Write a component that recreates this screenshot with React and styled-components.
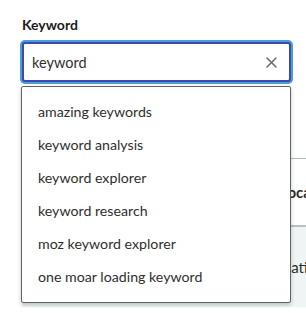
import React, { useState } from 'react';
import styled, { createGlobalStyle } from 'styled-components';

const GlobalStyle = createGlobalStyle`
  html, body {
    margin: 0;
    background: #fff;
    font-family: Lato, 'Open Sans', sans-serif;
    color: #2b2b2b;
    overflow: hidden;
  }
`;

const Page = styled.div`
  width: 306px;
  height: 313px;
  padding: 16px 0 0 22px;
  box-sizing: border-box;
  overflow: hidden;
`;

const Field = styled.div`
  position: relative;
  width: 269px;
`;

const Label = styled.label`
  display: block;
  font-size: 14px;
  font-weight: 700;
  line-height: 18px;
  color: #1d1d1d;
  margin-bottom: 8px;
`;

const InputBox = styled.div`
  display: flex;
  align-items: center;
  height: 40px;
  box-sizing: border-box;
  border: 2px solid #3a48b8;
  border-radius: 3px;
  box-shadow: 0 0 0 2px #4c9fcb;
  padding: 0 10px 0 8px;
  background: #fff;
`;

const Input = styled.input`
  flex: 1;
  border: none;
  outline: none;
  background: transparent;
  font-family: inherit;
  font-size: 14.5px;
  color: #2f2f2f;
  padding: 0;
`;

const ClearButton = styled.button`
  display: flex;
  align-items: center;
  justify-content: center;
  width: 16px;
  height: 16px;
  border: none;
  background: none;
  padding: 0;
  cursor: pointer;
`;

const Menu = styled.ul`
  position: absolute;
  z-index: 5;
  top: 70px;
  left: -1px;
  width: 270px;
  box-sizing: border-box;
  margin: 0;
  padding: 8px 0 9px;
  list-style: none;
  background: #fff;
  border: 1px solid #5d6468;
  border-radius: 2px;
  box-shadow: 0 2px 4px rgba(0, 0, 0, 0.22);
`;

const Option = styled.li`
  height: 33px;
  line-height: 33px;
  padding-left: 16px;
  font-size: 14.2px;
  color: #2f2f2f;
`;

const Table = styled.div`
  display: grid;
  grid-template-columns: 258px 1fr;
  width: 320px;
  margin-top: 76px;
`;

const Cell = styled.div`
  height: ${({ $head }) => ($head ? '66px' : '80px')};
  display: flex;
  align-items: center;
  font-size: 15px;
  font-weight: ${({ $head }) => ($head ? 700 : 400)};
  color: #2b2b2b;
  white-space: nowrap;
  background: ${({ $head }) => ($head ? '#fff' : '#eff5f5')};
  border-top: ${({ $head }) => ($head ? '1px solid #adbcbc' : 'none')};
  border-bottom: ${({ $head }) => ($head ? '2px solid #b6c3c3' : 'none')};
`;

const options = [
  'amazing keywords',
  'keyword analysis',
  'keyword explorer',
  'keyword research',
  'moz keyword explorer',
  'one moar loading keyword',
];

function App() {
  const [value, setValue] = useState('keyword');

  return (
    <>
      <GlobalStyle />
      <Page>
        <Field>
          <Label htmlFor="kw">Keyword</Label>
          <InputBox>
            <Input id="kw" value={value} onChange={e => setValue(e.target.value)} />
            <ClearButton onClick={() => setValue('')} aria-label="Clear">
              <svg width="11" height="11" viewBox="0 0 11 11">
                <path d="M1 1L10 10M10 1L1 10" stroke="#6b6b6b" strokeWidth="1.5" strokeLinecap="round" />
              </svg>
            </ClearButton>
          </InputBox>
          <Menu>
            {options.map(o => (
              <Option key={o}>{o}</Option>
            ))}
          </Menu>
        </Field>
        <Table>
          <Cell $head />
          <Cell $head>Location</Cell>
          <Cell />
          <Cell>National</Cell>
        </Table>
      </Page>
    </>
  );
}

export default App;
